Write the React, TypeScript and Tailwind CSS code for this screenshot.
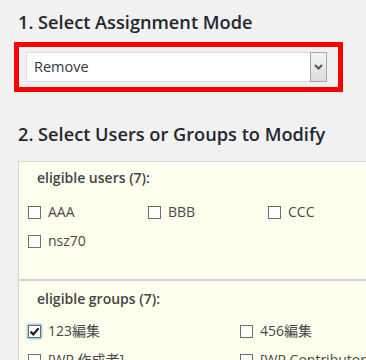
import React from "react";

const font = { fontFamily: '"Open Sans", "Noto Sans CJK JP", sans-serif' };

function Box({ checked = false }: { checked?: boolean }) {
  return (
    <span
      className={
        "mt-[4px] flex h-[13px] w-[13px] shrink-0 items-center justify-center border bg-white " +
        (checked
          ? "border-[#5b6f80] shadow-[0_0_2px_1px_rgba(30,140,190,0.55)]"
          : "border-[#6f6f6f]")
      }
    >
      {checked && (
        <svg width="11" height="11" viewBox="0 0 11 11">
          <path d="M1.5 5.6 L4.3 8.4 L9.6 2.2" fill="none" stroke="#1e1e1e" strokeWidth="2.2" />
        </svg>
      )}
    </span>
  );
}

function Item({ label, checked }: { label: string; checked?: boolean }) {
  return (
    <div className="flex items-start gap-[7px] text-[14px] leading-[20px] text-[#484848] whitespace-nowrap">
      <Box checked={checked} />
      <span>{label}</span>
    </div>
  );
}

export default function App() {
  return (
    <div className="h-[360px] w-[366px] overflow-hidden bg-[#f1f1f1]" style={font}>
      <h2 className="ml-[18px] mt-[9px] text-[18.2px] font-semibold leading-[26px] text-[#23282d]">
        1. Select Assignment Mode
      </h2>
      <div className="ml-[14px] mt-[7px] h-[50px] w-[329px] border-[5px] border-[#ff0000] pl-[7px] pt-[5px]">
        <div className="flex h-[30px] w-[301px] items-stretch border border-[#dddddd] bg-white">
          <div className="flex flex-1 items-center pl-[7px] text-[14.5px] text-[#32373c]">Remove</div>
          <div className="-my-px -mr-px flex w-[17px] items-center justify-center border border-[#a8a8a8] bg-gradient-to-b from-[#f4f4f4] to-[#dcdcdc]">
            <svg width="9" height="6" viewBox="0 0 9 6">
              <path d="M1 1 L4.5 4.5 L8 1" fill="none" stroke="#555" strokeWidth="2" />
            </svg>
          </div>
        </div>
      </div>
      <h2 className="ml-[18px] mt-[29px] text-[18.2px] font-semibold leading-[26px] text-[#23282d]">
        2. Select Users or Groups to Modify
      </h2>
      <div className="ml-[18px] mt-[14px] w-[420px] border-l border-t border-[#d6d6d6] bg-[#ffffee]">
        <div className="pb-[28px] pt-[6px]">
          <div className="pl-[18px] text-[14px] font-semibold leading-[20px] text-[#444]">
            eligible users (7):
          </div>
          <div className="mt-[14px] grid grid-cols-[120px_120px_120px] gap-y-[9px] pl-[9px]">
            <Item label="AAA" />
            <Item label="BBB" />
            <Item label="CCC" />
            <Item label="nsz70" />
          </div>
        </div>
        <div className="border-t-2 border-[#d6d6d6] pt-[8px]">
          <div className="pl-[18px] text-[14px] font-semibold leading-[20px] text-[#444]">
            eligible groups (7):
          </div>
          <div className="mt-[12px] grid grid-cols-[212px_212px] gap-y-[9px] pl-[9px]">
            <Item label="123編集" checked />
            <Item label="456編集" />
            <Item label="[WP 作成者]" />
            <Item label="[WP Contributor]" />
          </div>
        </div>
      </div>
    </div>
  );
}
